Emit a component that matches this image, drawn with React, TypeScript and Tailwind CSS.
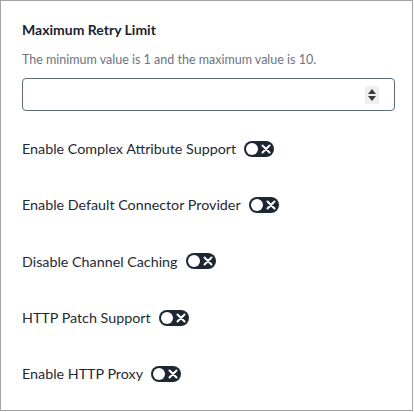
import React from "react";

function Toggle() {
  return (
    <span className="inline-flex items-center w-[30px] h-[16px] rounded-full bg-[#1d2733] px-[2px] ml-2 shrink-0">
      <span className="w-[12px] h-[12px] rounded-full bg-white" />
      <svg width="12" height="12" viewBox="0 0 12 12" className="ml-[2px]">
        <path d="M2.5 2.5 L9.5 9.5 M9.5 2.5 L2.5 9.5" stroke="white" strokeWidth="2" strokeLinecap="round" />
      </svg>
    </span>
  );
}

const rows = [
  "Enable Complex Attribute Support",
  "Enable Default Connector Provider",
  "Disable Channel Caching",
  "HTTP Patch Support",
  "Enable HTTP Proxy",
];

export default function App() {
  return (
    <div
      className="w-[413px] h-[411px] border border-[#a3a3a3] bg-white text-[#1f2933]"
      style={{ fontFamily: "Lato, 'Noto Sans', sans-serif" }}
    >
      <div className="pl-[21px] pr-[17px] pt-[20px]">
        <div className="text-[14px] font-bold leading-[18px] text-[#1b2430]">Maximum Retry Limit</div>
        <div className="mt-[13px] text-[12.5px] leading-[16px] text-[#6b7480]">
          The minimum value is 1 and the maximum value is 10.
        </div>
        <div className="mt-[10px] h-[33px] border border-[#5f6b77] rounded-[4px] flex items-center justify-end pr-[15px]">
          <div className="w-[14px] h-[18px] bg-[#efefef] flex flex-col items-center justify-center gap-[2px]">
            <svg width="8" height="5" viewBox="0 0 8 5"><path d="M4 0 L8 5 L0 5 Z" fill="#3a3a3a" /></svg>
            <svg width="8" height="5" viewBox="0 0 8 5"><path d="M0 0 L8 0 L4 5 Z" fill="#3a3a3a" /></svg>
          </div>
        </div>
        <div className="mt-[29px] flex flex-col gap-[38.2px]">
          {rows.map((r) => (
            <div key={r} className="flex items-center h-[18px] text-[14.3px] text-[#1f2933]">
              <span>{r}</span>
              <Toggle />
            </div>
          ))}
        </div>
      </div>
    </div>
  );
}
